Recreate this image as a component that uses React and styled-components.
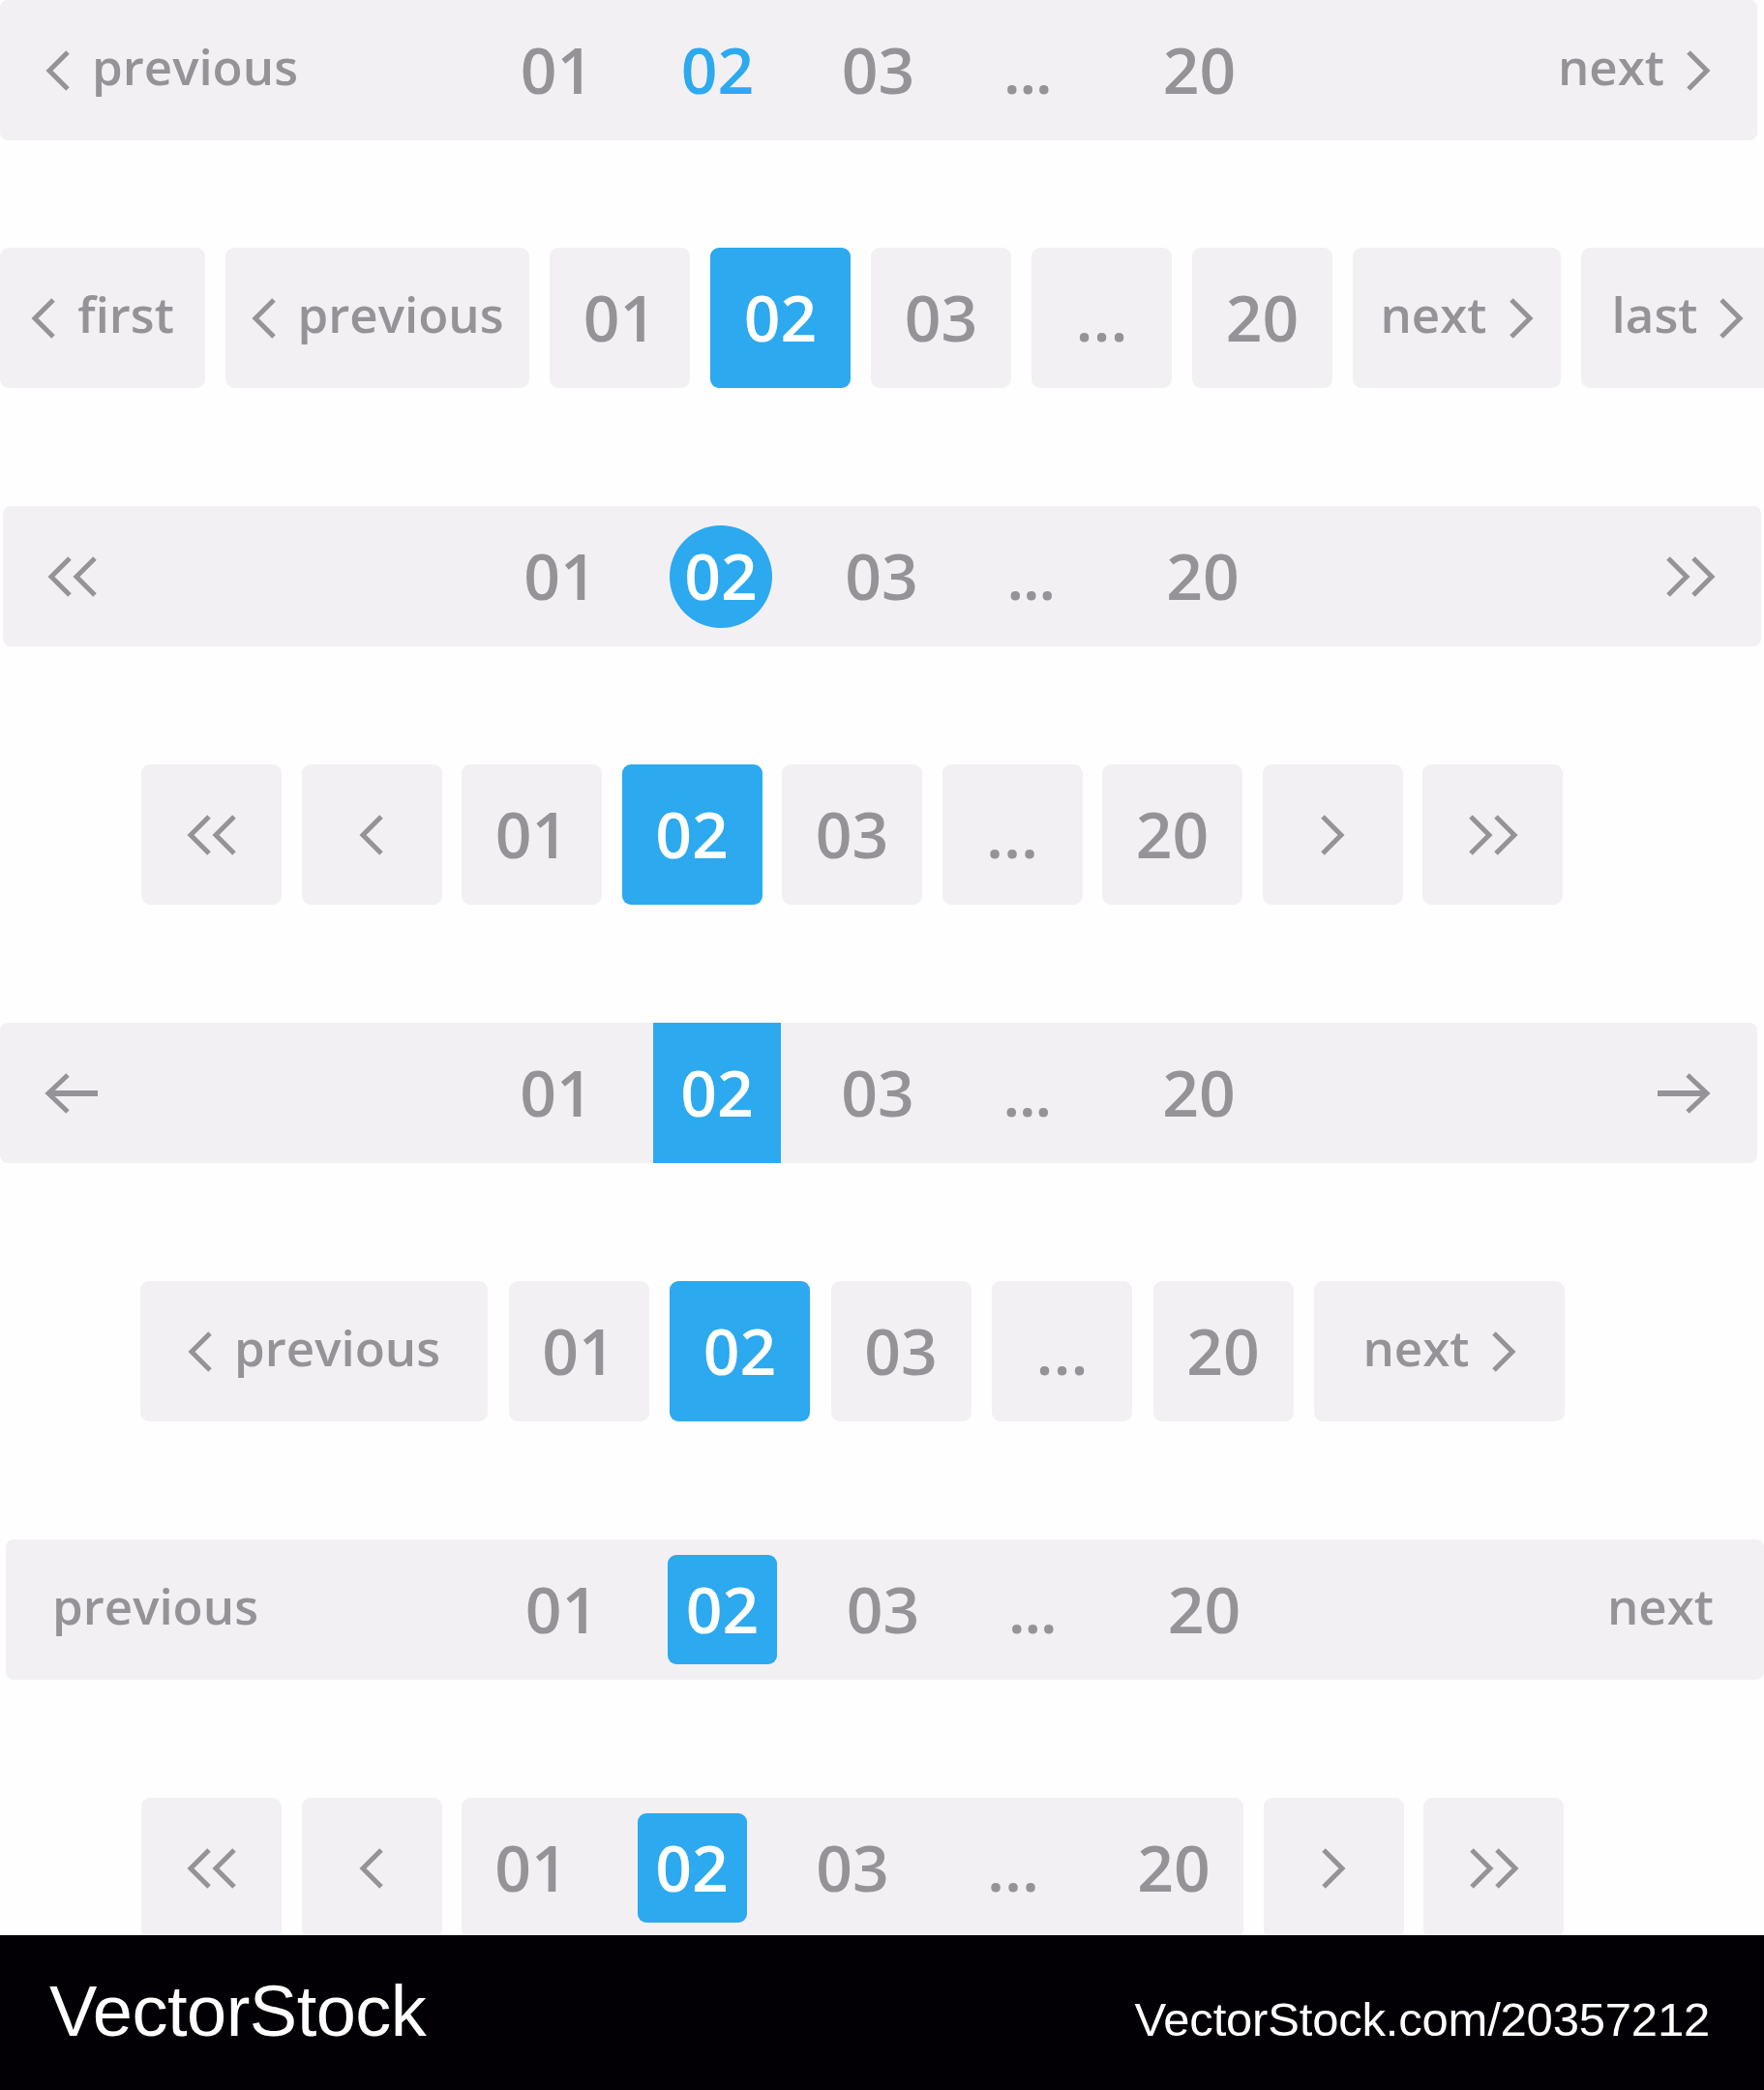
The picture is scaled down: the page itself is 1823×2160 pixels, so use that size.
import React from "react";
import styled, { createGlobalStyle, css } from "styled-components";

const GRAY = "#959397";
const BLUE = "#2ca9ef";
const BG = "#f2f0f3";

const GlobalStyle = createGlobalStyle`
  html, body {
    margin: 0;
    padding: 0;
    background: #fefefe;
  }
  body {
    font-family: "Open Sans", "Noto Sans", sans-serif;
  }
`;

const Page = styled.div`
  width: 1823px;
  height: 2160px;
  overflow: hidden;
  display: flex;
  flex-direction: column;
`;

const Rows = styled.div`
  height: 2000px;
  flex: none;
  overflow: hidden;
  display: flex;
  flex-direction: column;
  gap: 122px;
`;

// full width grey bar, numbers centred in the middle column
const Bar = styled.div`
  flex: none;
  box-sizing: border-box;
  height: 145px;
  width: ${(p) => p.$width || 1816}px;
  margin-left: ${(p) => p.$offset || 0}px;
  margin-bottom: ${(p) => p.$pull || 0}px;
  padding: 0 ${(p) => p.$padR || 48}px 0 ${(p) => p.$padL || 47}px;
  background: ${BG};
  border-radius: 8px;
  display: grid;
  grid-template-columns: 1fr auto 1fr;
  align-items: center;
`;

const Side = styled.div`
  display: flex;
  align-items: center;
  gap: 22px;
  justify-self: ${(p) => (p.$end ? "end" : "start")};
  color: ${GRAY};
  font-size: 51px;
  font-weight: 600;
  line-height: 1;
`;

const Label = styled.span`
  padding-bottom: 8px;
`;

const Numbers = styled.div`
  display: flex;
  gap: 34px;
  height: 100%;
  padding: 0 ${(p) => p.$pad || 0}px;
`;

const Slot = styled.div`
  width: 132px;
  height: 100%;
  display: flex;
  align-items: center;
  justify-content: center;
  background: ${(p) => (p.$fill ? BLUE : "transparent")};
`;

const Num = styled.span`
  display: flex;
  align-items: center;
  justify-content: center;
  font-size: 66px;
  font-weight: 600;
  line-height: 1;
  padding-bottom: 4px;
  color: ${(p) => (!p.$active ? GRAY : p.$shape === "text" ? BLUE : "#fff")};
  ${(p) =>
    p.$dots &&
    css`
      letter-spacing: -1.5px;
      margin-right: 24px;
    `}
  ${(p) =>
    p.$active &&
    p.$shape === "circle" &&
    css`
      width: 106px;
      height: 106px;
      box-sizing: border-box;
      border-radius: 50%;
      background: ${BLUE};
    `}
  ${(p) =>
    p.$active &&
    p.$shape === "box" &&
    css`
      width: 113px;
      height: 113px;
      box-sizing: border-box;
      border-radius: 9px;
      background: ${BLUE};
    `}
`;

// rows made of separate tiles
const Strip = styled.div`
  flex: none;
  height: 145px;
  display: flex;
  gap: ${(p) => p.$gap}px;
  margin-left: ${(p) => p.$offset || 0}px;
`;

const Tile = styled.div`
  flex: none;
  box-sizing: border-box;
  width: ${(p) => p.$w || 145}px;
  height: 100%;
  border-radius: 9px;
  background: ${(p) => (p.$active ? BLUE : BG)};
  color: ${(p) => (p.$active ? "#fff" : GRAY)};
  display: flex;
  align-items: center;
  justify-content: center;
  gap: 22px;
  font-weight: 600;
  line-height: 1;
  font-size: ${(p) => (p.$label ? 51 : 66)}px;
`;

const TileText = styled.span`
  padding-bottom: ${(p) => (p.$label ? 8 : 4)}px;
`;

const Footer = styled.footer`
  flex: none;
  height: 160px;
  box-sizing: border-box;
  background: #020004;
  color: #fff;
  display: flex;
  align-items: baseline;
  justify-content: space-between;
  padding: 42px 56px 0 51px;
  font-family: "Liberation Sans", Arial, sans-serif;
  line-height: 1;
`;

const Brand = styled.span`
  font-size: 74px;
  letter-spacing: -0.5px;
`;

const Url = styled.span`
  font-size: 49px;
  letter-spacing: -0.2px;
`;

function Chevron({ dir = "left", double }) {
  const w = double ? 52 : 26;
  const flip = (x) => (dir === "left" ? x : w - x);
  const one = (dx) =>
    `${flip(23 + dx)},2 ${flip(4 + dx)},21 ${flip(23 + dx)},40`;
  return (
    <svg width={w} height="42" viewBox={`0 0 ${w} 42`}>
      <polyline points={one(0)} fill="none" stroke={GRAY} strokeWidth="5" strokeLinejoin="miter" />
      {double && (
        <polyline points={one(26)} fill="none" stroke={GRAY} strokeWidth="5" strokeLinejoin="miter" />
      )}
    </svg>
  );
}

function Arrow({ dir = "left" }) {
  const w = 56;
  const f = (x) => (dir === "left" ? x : w - x);
  return (
    <svg width={w} height="42" viewBox={`0 0 ${w} 42`}>
      <polyline points={`${f(24)},2 ${f(4)},21 ${f(24)},40`} fill="none" stroke={GRAY} strokeWidth="5" />
      <line x1={f(5)} y1="21" x2={f(55)} y2="21" stroke={GRAY} strokeWidth="6" />
    </svg>
  );
}

const pages = ["01", "02", "03", "...", "20"];
const current = 1;

function NumberRun({ shape, pad, tight }) {
  return (
    <Numbers $pad={pad}>
      {pages.map((p, i) => (
        <Slot key={p} $fill={shape === "fill" && i === current}>
          <Num $active={i === current} $shape={shape} $dots={tight && p === "..."}>
            {p}
          </Num>
        </Slot>
      ))}
    </Numbers>
  );
}

function NumberTiles() {
  return pages.map((p, i) => (
    <Tile key={p} $active={i === current}>
      <TileText>{p}</TileText>
    </Tile>
  ));
}

export default function App() {
  return (
    <Page>
      <GlobalStyle />
      <Rows>
        <Bar $pull={-11}>
          <Side>
            <Chevron />
            <Label>previous</Label>
          </Side>
          <NumberRun shape="text" tight />
          <Side $end>
            <Label>next</Label>
            <Chevron dir="right" />
          </Side>
        </Bar>

        <Strip $gap={21}>
          <Tile $w={212} $label>
            <Chevron />
            <TileText $label>first</TileText>
          </Tile>
          <Tile $w={314} $label>
            <Chevron />
            <TileText $label>previous</TileText>
          </Tile>
          <NumberTiles />
          <Tile $w={215} $label>
            <TileText $label>next</TileText>
            <Chevron dir="right" />
          </Tile>
          <Tile $w={200} $label>
            <TileText $label>last</TileText>
            <Chevron dir="right" />
          </Tile>
        </Strip>

        <Bar $offset={3} $width={1817} $padL={46} $padR={47}>
          <Side>
            <Chevron double />
          </Side>
          <NumberRun shape="circle" tight />
          <Side $end>
            <Chevron double dir="right" />
          </Side>
        </Bar>

        <Strip $gap={20.5} $offset={146}>
          <Tile>
            <Chevron double />
          </Tile>
          <Tile>
            <Chevron />
          </Tile>
          <NumberTiles />
          <Tile>
            <Chevron dir="right" />
          </Tile>
          <Tile>
            <Chevron double dir="right" />
          </Tile>
        </Strip>

        <Bar $padL={46}>
          <Side>
            <Arrow />
          </Side>
          <NumberRun shape="fill" tight />
          <Side $end>
            <Arrow dir="right" />
          </Side>
        </Bar>

        <Strip $gap={21.5} $offset={145}>
          <Tile $w={359} $label>
            <Chevron />
            <TileText $label>previous</TileText>
          </Tile>
          <NumberTiles />
          <Tile $w={259} $label>
            <TileText $label>next</TileText>
            <Chevron dir="right" />
          </Tile>
        </Strip>

        <Bar $offset={6} $width={1817} $padL={48} $padR={52}>
          <Side>
            <Label>previous</Label>
          </Side>
          <NumberRun shape="box" tight />
          <Side $end>
            <Label>next</Label>
          </Side>
        </Bar>

        <Strip $gap={20.5} $offset={146}>
          <Tile>
            <Chevron double />
          </Tile>
          <Tile>
            <Chevron />
          </Tile>
          <Tile $w={808}>
            <NumberRun shape="box" pad={7} />
          </Tile>
          <Tile>
            <Chevron dir="right" />
          </Tile>
          <Tile>
            <Chevron double dir="right" />
          </Tile>
        </Strip>
      </Rows>
      <Footer>
        <Brand>VectorStock</Brand>
        <Url>VectorStock.com/20357212</Url>
      </Footer>
    </Page>
  );
}
